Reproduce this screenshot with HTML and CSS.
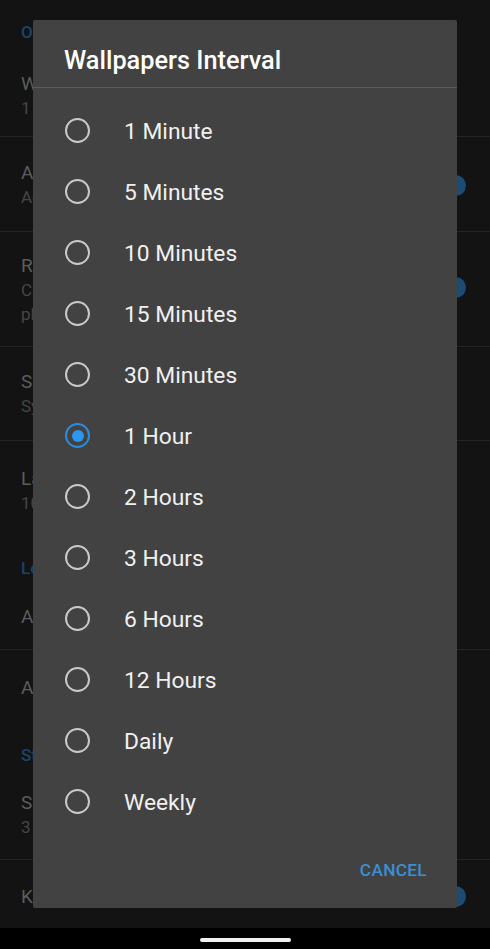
FILE: index.html
```html
<!DOCTYPE html>
<html>
<head>
<meta charset="utf-8">
<link rel="stylesheet" href="styles.css">
</head>
<body>
<div class="screen">
  <div class="settings">
    <div class="section h1">Options</div>
    <div class="item i1 div"><div class="t">Wallpapers</div><div class="s">1 Hour</div></div>
    <div class="item i2 div"><div class="t">Auto</div><div class="s">Active</div><span class="toggle"></span></div>
    <div class="item i3 div"><div class="t">Random</div><div class="s">Change</div><div class="s">place</div><span class="toggle"></span></div>
    <div class="item i4 div"><div class="t">Source</div><div class="s">Sync</div></div>
    <div class="item i5"><div class="t">Last</div><div class="s">10:00</div></div>
    <div class="section h2">Lock</div>
    <div class="item i6 div"><div class="t">Apply</div></div>
    <div class="item i7"><div class="t">Apply all</div></div>
    <div class="section h3">Storage</div>
    <div class="item i8 div"><div class="t">Saved</div><div class="s">3 files</div></div>
    <div class="item i9"><div class="t">Keep on</div><span class="toggle"></span></div>
  </div>
  <div class="navbar"><span class="pill"></span></div>

  <div class="dialog">
    <div class="d-title">Wallpapers Interval</div>
    <div class="d-list">
      <div class="opt"><span class="radio"></span><span class="lbl">1 Minute</span></div>
      <div class="opt"><span class="radio"></span><span class="lbl">5 Minutes</span></div>
      <div class="opt"><span class="radio"></span><span class="lbl">10 Minutes</span></div>
      <div class="opt"><span class="radio"></span><span class="lbl">15 Minutes</span></div>
      <div class="opt"><span class="radio"></span><span class="lbl">30 Minutes</span></div>
      <div class="opt"><span class="radio on"></span><span class="lbl">1 Hour</span></div>
      <div class="opt"><span class="radio"></span><span class="lbl">2 Hours</span></div>
      <div class="opt"><span class="radio"></span><span class="lbl">3 Hours</span></div>
      <div class="opt"><span class="radio"></span><span class="lbl">6 Hours</span></div>
      <div class="opt"><span class="radio"></span><span class="lbl">12 Hours</span></div>
      <div class="opt"><span class="radio"></span><span class="lbl">Daily</span></div>
      <div class="opt"><span class="radio"></span><span class="lbl">Weekly</span></div>
    </div>
    <div class="d-actions"><span class="btn">CANCEL</span></div>
  </div>
</div>
</body>
</html>
```
FILE: styles.css
```css
* { box-sizing: border-box; }
html, body { margin: 0; padding: 0; }
body {
  width: 490px;
  height: 949px;
  overflow: hidden;
  background: #131313;
  font-family: Roboto, "Noto Sans", sans-serif;
}
.screen {
  position: relative;
  width: 490px;
  height: 949px;
  display: flex;
  flex-direction: column;
}
.settings {
  flex: 1;
  display: flex;
  flex-direction: column;
  padding-top: 18px;
}
.section {
  color: #1b4468;
  font-size: 17px;
  font-weight: 500;
  padding-left: 21px;
  display: flex;
  align-items: center;
  flex: none;
}
.h1 { height: 28px; }
.h2 { height: 58px; }
.h3 { height: 46px; padding-top: 16px; }
.item {
  position: relative;
  display: flex;
  flex-direction: column;
  justify-content: center;
  padding-left: 21px;
  padding-right: 24px;
  flex: none;
}
.item.div { border-bottom: 1px solid #242424; }
.t { color: #5c5c5c; font-size: 19px; line-height: 25px; white-space: nowrap; }
.s { color: #464646; font-size: 17px; line-height: 24px; white-space: nowrap; }
.i1 { height: 91px; padding-top: 8px; }
.i2 { height: 95px; }
.i3 { height: 115px; }
.i4 { height: 94px; }
.i5 { height: 98px; }
.i6 { height: 53px; padding-bottom: 13px; }
.i7 { height: 74px; }
.i8 { height: 90px; }
.i9 { flex: 1; padding-top: 4px; }
.toggle {
  position: absolute;
  right: 24px;
  top: 50%;
  width: 21px;
  height: 21px;
  margin-top: -9px;
  border-radius: 50%;
  background: #1c4c76;
}
.i3 .toggle { margin-top: -12px; }
.i9 .toggle { margin-top: -8px; }
.navbar {
  height: 21px;
  background: #000;
  display: flex;
  justify-content: center;
  align-items: center;
  flex: none;
}
.pill {
  width: 91px;
  height: 4px;
  border-radius: 2px;
  background: #f0f0f0;
  margin-top: 2px;
}

.dialog {
  position: absolute;
  left: 33px;
  top: 20px;
  width: 424px;
  height: 888px;
  background: #424242;
  border-radius: 2px;
  display: flex;
  flex-direction: column;
}
.d-title {
  height: 68px;
  padding: 26px 0 0 31px;
  color: #ffffff;
  font-size: 25.3px;
  font-weight: 500;
  border-bottom: 1px solid #5c5c5c;
  line-height: 30px;
}
.d-list {
  padding-top: 12px;
  display: flex;
  flex-direction: column;
}
.opt {
  height: 61px;
  display: flex;
  align-items: center;
  padding-left: 32px;
}
.radio {
  width: 25px;
  height: 25px;
  border-radius: 50%;
  border: 2.4px solid #c9c9c9;
  display: flex;
  align-items: center;
  justify-content: center;
  flex: none;
}
.radio.on { border-color: #2a8de0; }
.radio.on::after {
  content: "";
  width: 12px;
  height: 12px;
  border-radius: 50%;
  background: #2b95f0;
}
.lbl {
  margin-left: 34px;
  color: #f0f0f0;
  font-size: 22.8px;
  padding-top: 1px;
}
.d-actions {
  flex: 1;
  display: flex;
  justify-content: flex-end;
  align-items: center;
  padding-right: 30px;
}
.btn {
  color: #3a8fd3;
  font-size: 17.3px;
  font-weight: 500;
  letter-spacing: 0.3px;
}
```
